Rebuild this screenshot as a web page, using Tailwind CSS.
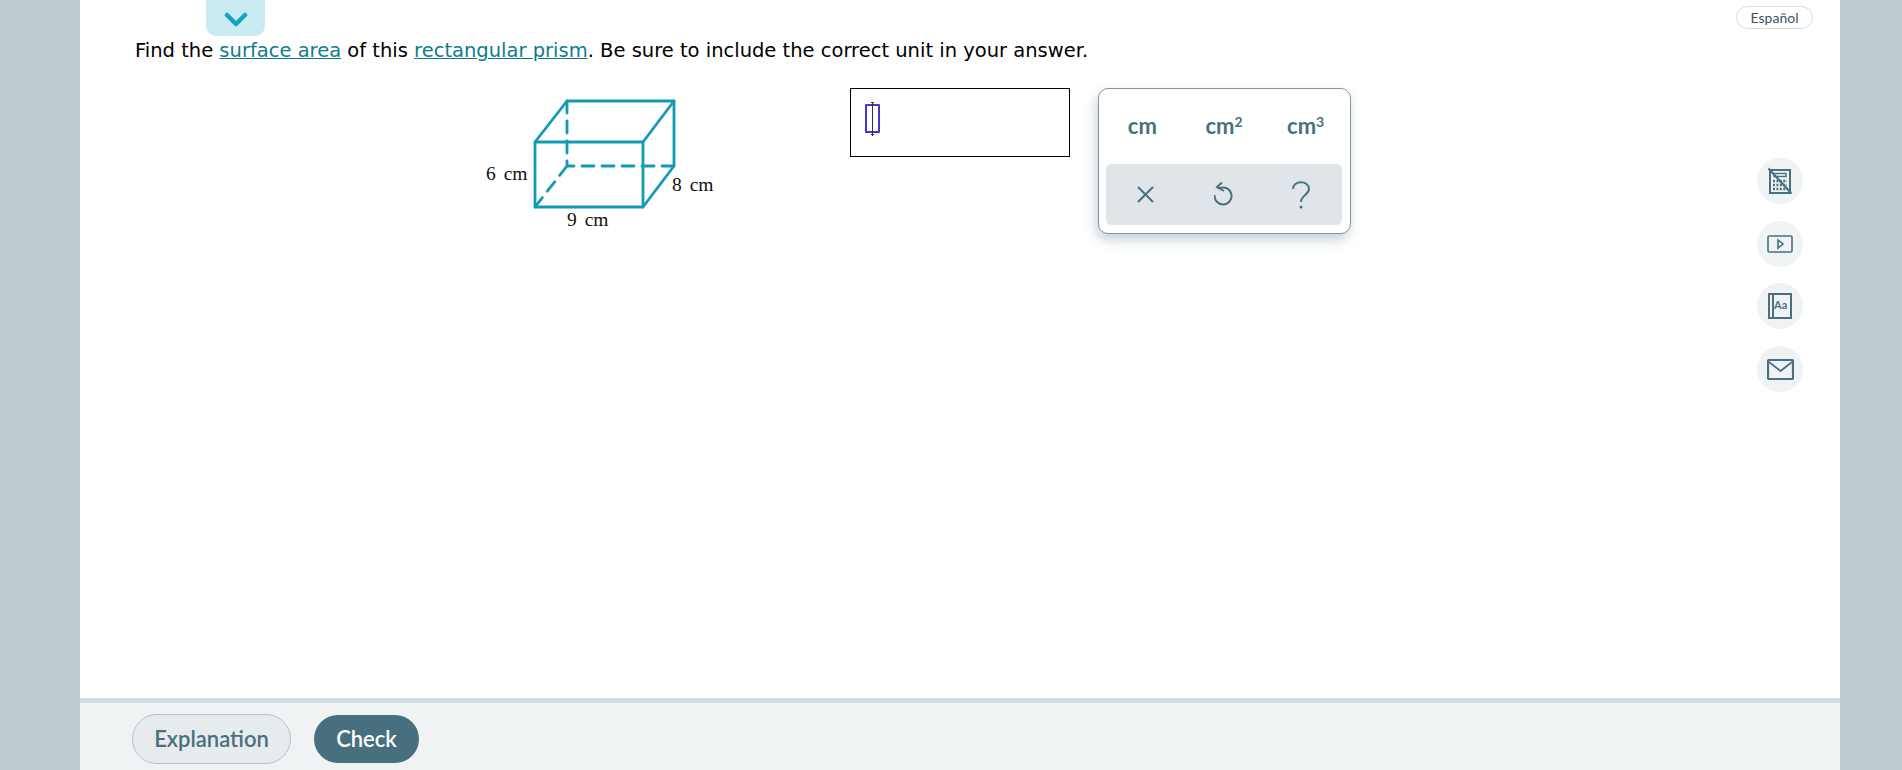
<!DOCTYPE html>
<html lang="en">
<head>
    <meta charset="UTF-8">
    <title>Surface area</title>
    <script src="https://cdn.jsdelivr.net/npm/@tailwindcss/browser@4"></script>
</head>
<body class="bg-[#bfccd2] overflow-hidden">
    <div class="mx-[80px] w-[1760px] h-[770px] bg-white flex flex-col">
        <div class="flex-1 flex justify-between">
            <!-- question -->
            <div class="pl-[55px]">
                <div class="ml-[71px] w-[59px] h-[36px] bg-[#c9ebf2] rounded-b-[10px] flex items-center justify-center">
                    <svg width="24" height="16" viewBox="0 0 24 16" fill="none" stroke="#12a5c0" stroke-width="4.5" stroke-linecap="round" stroke-linejoin="round" class="mt-[3px]"><path d="M3 3 L12 12 L21 3"/></svg>
                </div>
                <p class="h-[28px] mt-[1px] text-[19.5px] leading-[28px] text-black font-['DejaVu_Sans',sans-serif]">Find the <a href="#" class="text-[#0e7c8c] underline">surface area</a> of this <a href="#" class="text-[#0e7c8c] underline">rectangular prism</a>. Be sure to include the correct unit in your answer.</p>
                <div class="mt-[23px] ml-[345px] flex items-start">
                    <svg width="240" height="150" viewBox="480 88 240 150" fill="none" stroke="#129bb4" stroke-width="2.8" stroke-linecap="round" stroke-linejoin="round" class="block">
                        <path d="M535 142 H643 V207 H535 Z"/>
                        <path d="M535 142 L567 101 H674 V166 L643 207"/>
                        <path d="M643 142 L674 101"/>
                        <path d="M567 101 V166 H674" stroke-dasharray="12 8"/>
                        <path d="M567 166 L535 207" stroke-dasharray="12 8"/>
                        <g fill="#111" stroke="none" font-family="'Liberation Serif', serif" font-size="19.5" word-spacing="3">
                            <text x="486" y="180">6 cm</text>
                            <text x="672" y="191">8 cm</text>
                            <text x="567" y="226">9 cm</text>
                        </g>
                    </svg>
                    <!-- answer box -->
                    <div class="ml-[130px] w-[220px] h-[69px] border border-black pl-[14px] pt-[15px]">
                        <div class="relative w-[15px] h-[29px] border-2 border-[#4438c4] rounded-[1px]">
                            <div class="absolute left-[4px] top-[-4px] w-[3px] h-[3px] border-t border-[#333]"></div>
                            <div class="absolute left-[5px] top-[-3px] w-[1px] h-[33px] bg-[#333]"></div>
                            <div class="absolute left-[4px] bottom-[-4px] w-[3px] h-[3px] border-b border-[#333]"></div>
                        </div>
                    </div>
                    <!-- unit palette -->
                    <div class="ml-[28px] w-[253px] h-[146px] rounded-[10px] border border-[#84979f] bg-white shadow-[-2px_6px_12px_rgba(70,110,125,0.3)] pl-[7px] pr-[8px] pb-[8px] flex flex-col font-['Lato',sans-serif]">
                        <div class="flex-1 pb-[2px] grid grid-cols-3 items-center text-center text-[22px] font-bold text-[#4a7080]">
                            <span class="mr-[6px]">cm</span>
                            <span>cm<sup class="text-[14px] leading-none">2</sup></span>
                            <span class="ml-[6px]">cm<sup class="text-[14px] leading-none">3</sup></span>
                        </div>
                        <div class="h-[61px] bg-[#dfe5e8] rounded-[5px] grid grid-cols-3 items-center justify-items-center text-[#4a7080]">
                            <svg width="19" height="19" viewBox="0 0 19 19" fill="none" stroke="currentColor" stroke-width="2"><path d="M2 2 L17 17 M17 2 L2 17"/></svg>
                            <svg width="19" height="25" viewBox="0 0 19 25" fill="none" stroke="currentColor" stroke-width="2"><path d="M3 5 L6 6 A8.5 8.5 0 1 1 0.6 13"/><path d="M8 0.5 L3 5 L10 9"/></svg>
                            <svg width="20" height="28" viewBox="0 0 20 28" fill="none" stroke="currentColor" stroke-width="2" class="mr-[3px]"><path d="M2 8 C2 -1 18 -1 18 8 C18 14 10 14 10 21"/><circle cx="10" cy="26" r="1.5" fill="currentColor" stroke="none"/></svg>
                        </div>
                    </div>
                </div>
            </div>
            <!-- right tools -->
            <div class="w-[104px] pt-[6px] pr-[27px] flex flex-col items-end font-['Lato',sans-serif]">
                <button class="w-[77px] h-[23px] rounded-full border border-[#d5dee1] text-[14px] leading-none text-[#3a5460]">Español</button>
                <div class="mt-[129px] self-end pr-[10px] flex flex-col gap-[16.7px]">
                    <div class="w-[46px] h-[46px] rounded-full bg-[#eff3f4] flex items-center justify-center">
                        <svg width="26" height="28" viewBox="0 0 26 28" fill="none" stroke="#4a7080" stroke-width="2">
                            <path d="M3 3 H23 V26 H3 Z"/>
                            <rect x="7" y="6.5" width="12" height="3" stroke-width="1.4"/>
                            <path d="M6 14 H20 M6 18 H20 M6 22 H20" stroke-width="2.4" stroke-dasharray="2 1.4"/>
                            <path d="M1.5 1.5 L24.5 26.5" stroke-width="2.2"/>
                        </svg>
                    </div>
                    <div class="w-[46px] h-[46px] rounded-full bg-[#eff3f4] flex items-center justify-center">
                        <svg width="26" height="18" viewBox="0 0 26 18" fill="none" stroke="#4a7080" stroke-width="1.6"><rect x="1" y="1" width="24" height="16" rx="1.5"/><path d="M11 5 L16 9 L11 13 Z"/></svg>
                    </div>
                    <div class="w-[46px] h-[46px] rounded-full bg-[#eff3f4] flex items-center justify-center relative">
                        <svg width="24" height="26" viewBox="0 0 24 26" fill="none" stroke="#4a7080" stroke-width="2"><path d="M1 1 H23 V25 H1 Z M5 1 V25"/></svg>
                        <span class="absolute left-[17px] top-[16px] text-[11px] leading-[12px] font-bold text-[#4a7080]">Aa</span>
                    </div>
                    <div class="w-[46px] h-[46px] rounded-full bg-[#eff3f4] flex items-center justify-center">
                        <svg width="27" height="21" viewBox="0 0 27 21" fill="none" stroke="#4a7080"><rect x="1" y="1" width="25" height="19" rx="1" stroke-width="2.2"/><path d="M2 3 L13.5 12 L25 3" stroke-width="1.8"/></svg>
                    </div>
                </div>
            </div>
        </div>
        <!-- footer -->
        <div class="h-[72px] shrink-0 bg-[#eff3f4] border-t-[5px] border-[#d0dde0] pl-[52px] pt-[11px] flex items-start font-['Lato',sans-serif]">
            <button class="w-[159px] h-[50px] pb-[2px] rounded-full border border-[#b5c3c9] bg-[#e6ebee] text-[22px] font-semibold text-[#4a7080]">Explanation</button>
            <button class="ml-[23px] mt-[1px] w-[105px] h-[48px] pb-[2px] rounded-full bg-[#476f7e] text-[22px] font-semibold text-white">Check</button>
        </div>
    </div>
</body>
</html>
